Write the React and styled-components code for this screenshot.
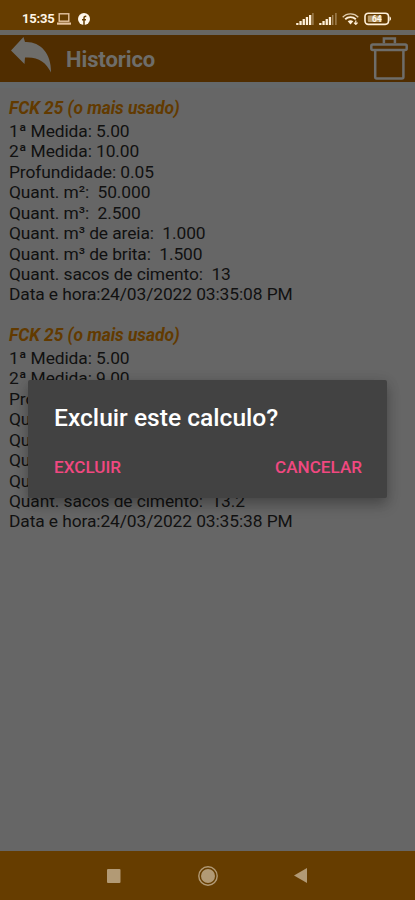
import React from 'react';
import styled, { createGlobalStyle } from 'styled-components';

const GlobalStyle = createGlobalStyle`
  * {
    box-sizing: border-box;
  }

  body {
    margin: 0;
    background: #666;
    font-family: Roboto, 'Liberation Sans', sans-serif;
  }
`;

const Screen = styled.div`
  position: relative;
  display: flex;
  flex-direction: column;
  width: 415px;
  height: 900px;
  overflow: hidden;
  background: #666;
`;

const StatusBar = styled.div`
  display: flex;
  align-items: center;
  justify-content: space-between;
  flex-shrink: 0;
  height: 30px;
  padding: 7px 23px 0 22px;
  background: #663d00;
  color: #fff5e6;
`;

const StatusGroup = styled.div`
  display: flex;
  align-items: center;
  gap: ${({ $gap }) => $gap}px;
`;

const Clock = styled.span`
  font-size: 13px;
  line-height: 15px;
  font-weight: 700;
  letter-spacing: -0.2px;
`;

const Toolbar = styled.header`
  display: flex;
  align-items: center;
  flex-shrink: 0;
  height: 58px;
  padding: 0 7px 0 11px;
  border-top: 5px solid #676663;
  border-bottom: 6px solid #64686a;
  background: #502d00;
  color: #6e6d6a;
`;

const ToolbarTitle = styled.h1`
  flex: 1;
  margin: 2px 0 0 14px;
  font-size: 22px;
  line-height: 26px;
  font-weight: 700;
  letter-spacing: -0.1px;
`;

const IconButton = styled.button`
  display: flex;
  align-self: ${({ $align }) => $align || 'center'};
  padding: 2px 0;
  border: 0;
  background: none;
  color: inherit;
`;

const List = styled.main`
  flex: 1;
  padding: 9px 9px 0;
`;

const Record = styled.section`
  height: 227px;
`;

const RecordTitle = styled.h2`
  margin: 0 0 2px;
  font-size: 17.4px;
  line-height: 22px;
  font-weight: 700;
  font-style: italic;
  letter-spacing: -0.05px;
  color: #623a00;
`;

const RecordLine = styled.p`
  margin: 0;
  font-size: 17.4px;
  line-height: 20.42px;
  letter-spacing: -0.1px;
  white-space: pre;
  color: #111;
`;

const NavBar = styled.nav`
  display: flex;
  align-items: center;
  justify-content: space-between;
  flex-shrink: 0;
  height: 49px;
  padding: 0 108px 0 107px;
  background: #663d00;
  color: #b29a75;
`;

const Dialog = styled.div`
  position: absolute;
  top: 380px;
  left: 28px;
  width: 359px;
  height: 118px;
  padding: 23px 25px 0 26px;
  border-radius: 2px;
  background: #424242;
  box-shadow: 0 7px 14px rgba(0, 0, 0, 0.24), 0 2px 14px rgba(0, 0, 0, 0.12);
`;

const DialogTitle = styled.h2`
  margin: 0;
  font-size: 24.6px;
  line-height: 30px;
  font-weight: 500;
  color: #fff;
`;

const DialogActions = styled.div`
  display: flex;
  justify-content: space-between;
  margin-top: 24px;
`;

const DialogButton = styled.button`
  padding: 0;
  border: 0;
  background: none;
  font-family: inherit;
  font-size: 17.1px;
  line-height: 20px;
  font-weight: 500;
  color: #f04880;
`;

const LaptopIcon = () => (
  <svg width="14" height="12" viewBox="0 0 14 12" fill="none" stroke="#e5c4a0" strokeWidth="1.4">
    <rect x="2.2" y="0.8" width="9.6" height="7.4" />
    <path d="M0 10.6h14" strokeWidth="2.2" />
  </svg>
);

const FacebookIcon = () => (
  <svg width="12" height="12" viewBox="0 0 12 12">
    <circle cx="6" cy="6" r="6" fill="#fff8ec" />
    <path d="M6 12V5.2c0-1.4.8-2 2.3-1.8M4 6.8h4" fill="none" stroke="#663d00" strokeWidth="1.5" />
  </svg>
);

const SignalIcon = ({ level }) => (
  <svg width="18" height="12" viewBox="0 0 18 12" fill="#fff0d8">
    {[2, 4, 6, 8, 10, 12].map((h, i) => (
      <rect
        key={h}
        x={i * 3.2 + 0.2}
        y={12 - h}
        width={i < level ? 2.3 : 1.4}
        height={h}
        opacity={i < level ? 1 : 0.4}
      />
    ))}
  </svg>
);

const WifiIcon = () => (
  <svg width="17" height="12" viewBox="0 0 17 12" fill="none" stroke="#fff0d8">
    <path d="M.7 4.2C5-.2 12-.2 16.3 4.2" strokeWidth="1.3" opacity=".8" />
    <path d="M3.2 6.3c3-2.9 7.6-2.9 10.6 0" strokeWidth="1.9" />
    <path d="M5.7 8.3c1.7-1.5 3.9-1.5 5.6 0L8.5 11.5z" fill="#fff0d8" stroke="none" />
    <path d="M13.8 7.5v3.8M12 9.6l1.8 1.8 1.8-1.8" strokeWidth="1.2" />
  </svg>
);

const BatteryIcon = () => (
  <svg width="28" height="14" viewBox="0 0 28 14">
    <rect x="1" y="1.2" width="23.5" height="11.2" rx="3.3" fill="none" stroke="#fff0d8" strokeWidth="1.6" />
    <rect x="3.8" y="3.6" width="14" height="6.4" rx="1" fill="#b89a68" />
    <path d="M25.5 4.6c2 .6 2 3.8 0 4.4z" fill="#fff0d8" />
    <text x="12.8" y="10" fontSize="8.5" fontWeight="700" textAnchor="middle" fill="#fff8ec">
      64
    </text>
  </svg>
);

const BackIcon = () => (
  <svg width="41" height="36" viewBox="0 0 41 36" fill="currentColor">
    <path d="M0 13.5 12.5 0l1.500 5C28 4 40.500 15 40 35.500 35 25 27 19.500 14 20.500L13.500 27z" />
  </svg>
);

const TrashIcon = () => (
  <svg width="38" height="43" viewBox="0 0 38 43" fill="none" stroke="currentColor" strokeWidth="2.5">
    <path d="M13.9 6.3V1.6h11v4.7" />
    <rect x="1.3" y="7.5" width="35.4" height="5.4" rx="1.5" />
    <path d="M5.2 13v27q0 1.500 1.500 1.500h25.200q1.500 0 1.500-1.500V13" />
  </svg>
);

const SquareIcon = () => (
  <svg width="14" height="14" viewBox="0 0 14 14">
    <rect width="13.5" height="14" rx="1" fill="currentColor" />
  </svg>
);

const HomeIcon = () => (
  <svg width="20" height="20" viewBox="0 0 20 20">
    <circle cx="10" cy="10" r="9.2" fill="none" stroke="currentColor" strokeWidth="1.4" />
    <circle cx="10" cy="10" r="7" fill="currentColor" />
  </svg>
);

const TriangleIcon = () => (
  <svg width="13" height="15" viewBox="0 0 13 15">
    <path d="M0 7.5 13 0v15z" fill="currentColor" />
  </svg>
);

const records = [
  {
    title: 'FCK 25 (o mais usado)',
    lines: [
      '1ª Medida: 5.00',
      '2ª Medida: 10.00',
      'Profundidade: 0.05',
      'Quant. m²:  50.000',
      'Quant. m³:  2.500',
      'Quant. m³ de areia:  1.000',
      'Quant. m³ de brita:  1.500',
      'Quant. sacos de cimento:  13',
      'Data e hora:24/03/2022 03:35:08 PM',
    ],
  },
  {
    title: 'FCK 25 (o mais usado)',
    lines: [
      '1ª Medida: 5.00',
      '2ª Medida: 9.00',
      'Pro',
      'Qu',
      'Qu',
      'Qu',
      'Qu',
      'Quant. sacos de cimento:  13.2',
      'Data e hora:24/03/2022 03:35:38 PM',
    ],
  },
];

const App = () => {
  return (
    <>
      <GlobalStyle />
      <Screen>
        <StatusBar>
          <StatusGroup $gap={7}>
            <StatusGroup $gap={2}>
              <Clock>15:35</Clock>
              <LaptopIcon />
            </StatusGroup>
            <FacebookIcon />
          </StatusGroup>
          <StatusGroup $gap={5}>
            <SignalIcon level={5} />
            <SignalIcon level={4} />
            <WifiIcon />
            <BatteryIcon />
          </StatusGroup>
        </StatusBar>
        <Toolbar>
          <IconButton aria-label="Voltar" $align="flex-start">
            <BackIcon />
          </IconButton>
          <ToolbarTitle>Historico</ToolbarTitle>
          <IconButton aria-label="Excluir">
            <TrashIcon />
          </IconButton>
        </Toolbar>
        <List>
          {records.map((record, index) => (
            <Record key={index}>
              <RecordTitle>{record.title}</RecordTitle>
              {record.lines.map((line, i) => (
                <RecordLine key={i}>{line}</RecordLine>
              ))}
            </Record>
          ))}
        </List>
        <NavBar>
          <SquareIcon />
          <HomeIcon />
          <TriangleIcon />
        </NavBar>
        <Dialog role="dialog">
          <DialogTitle>Excluir este calculo?</DialogTitle>
          <DialogActions>
            <DialogButton>EXCLUIR</DialogButton>
            <DialogButton>CANCELAR</DialogButton>
          </DialogActions>
        </Dialog>
      </Screen>
    </>
  );
};

export default App;
